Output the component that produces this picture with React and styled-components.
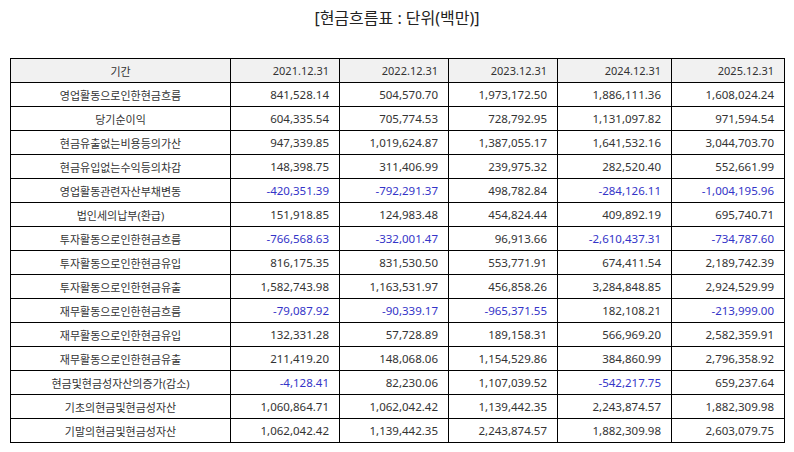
import React from "react";
import styled, { createGlobalStyle } from "styled-components";

const GlobalStyle = createGlobalStyle`
  html, body { margin: 0; padding: 0; background: #ffffff; }
  body { font-family: "Noto Sans", "Noto Sans CJK KR", sans-serif; color: #222; }
`;

const Page = styled.div`
  width: 794px;
  padding: 7px 10px 0 10px;
  box-sizing: border-box;
`;

const Title = styled.h1`
  margin: 0;
  height: 22px;
  line-height: 22px;
  font-size: 16px;
  font-weight: 400;
  text-align: center;
  color: #222;
  font-family: "Noto Sans", "Noto Sans CJK KR", sans-serif;
`;

const Table = styled.table`
  margin-top: 29px;
  width: 774px;
  border-collapse: collapse;
  table-layout: fixed;
  border: 1px solid #000;
`;

const HeadCell = styled.th`
  height: 23px;
  padding: 0 10px;
  border: 1px solid #000;
  background: #f1f1f1;
  font-size: 11px;
  font-weight: 400;
  color: #333;
  text-align: ${(p) => (p.$label ? "center" : "right")};
`;

const LabelCell = styled.td`
  height: 23px;
  padding: 0 6px;
  border: 1px solid #000;
  font-size: 11px;
  text-align: center;
  color: #333;
  white-space: nowrap;
`;

const NumCell = styled.td`
  height: 23px;
  padding: 0 10px;
  border: 1px solid #000;
  font-size: 11.5px;
  text-align: right;
  white-space: nowrap;
  color: ${(p) => (p.$negative ? "#3434c8" : "#333")};
`;

const years = ["2021.12.31", "2022.12.31", "2023.12.31", "2024.12.31", "2025.12.31"];
const widths = [220, 109, 109, 109, 114, 113];

const rows = [
  ["영업활동으로인한현금흐름", "841,528.14", "504,570.70", "1,973,172.50", "1,886,111.36", "1,608,024.24"],
  ["당기순이익", "604,335.54", "705,774.53", "728,792.95", "1,131,097.82", "971,594.54"],
  ["현금유출없는비용등의가산", "947,339.85", "1,019,624.87", "1,387,055.17", "1,641,532.16", "3,044,703.70"],
  ["현금유입없는수익등의차감", "148,398.75", "311,406.99", "239,975.32", "282,520.40", "552,661.99"],
  ["영업활동관련자산부채변동", "-420,351.39", "-792,291.37", "498,782.84", "-284,126.11", "-1,004,195.96"],
  ["법인세의납부(환급)", "151,918.85", "124,983.48", "454,824.44", "409,892.19", "695,740.71"],
  ["투자활동으로인한현금흐름", "-766,568.63", "-332,001.47", "96,913.66", "-2,610,437.31", "-734,787.60"],
  ["투자활동으로인한현금유입", "816,175.35", "831,530.50", "553,771.91", "674,411.54", "2,189,742.39"],
  ["투자활동으로인한현금유출", "1,582,743.98", "1,163,531.97", "456,858.26", "3,284,848.85", "2,924,529.99"],
  ["재무활동으로인한현금흐름", "-79,087.92", "-90,339.17", "-965,371.55", "182,108.21", "-213,999.00"],
  ["재무활동으로인한현금유입", "132,331.28", "57,728.89", "189,158.31", "566,969.20", "2,582,359.91"],
  ["재무활동으로인한현금유출", "211,419.20", "148,068.06", "1,154,529.86", "384,860.99", "2,796,358.92"],
  ["현금및현금성자산의증가(감소)", "-4,128.41", "82,230.06", "1,107,039.52", "-542,217.75", "659,237.64"],
  ["기초의현금및현금성자산", "1,060,864.71", "1,062,042.42", "1,139,442.35", "2,243,874.57", "1,882,309.98"],
  ["기말의현금및현금성자산", "1,062,042.42", "1,139,442.35", "2,243,874.57", "1,882,309.98", "2,603,079.75"],
];

export default function App() {
  return (
    <>
      <GlobalStyle />
      <Page>
        <Title>[현금흐름표 : 단위(백만)]</Title>
        <Table>
          <colgroup>
            {widths.map((w, i) => (
              <col key={i} style={{ width: w }} />
            ))}
          </colgroup>
          <thead>
            <tr>
              <HeadCell $label>기간</HeadCell>
              {years.map((y) => (
                <HeadCell key={y}>{y}</HeadCell>
              ))}
            </tr>
          </thead>
          <tbody>
            {rows.map(([label, ...vals]) => (
              <tr key={label}>
                <LabelCell>{label}</LabelCell>
                {vals.map((v, i) => (
                  <NumCell key={i} $negative={v.startsWith("-")}>
                    {v}
                  </NumCell>
                ))}
              </tr>
            ))}
          </tbody>
        </Table>
      </Page>
    </>
  );
}
